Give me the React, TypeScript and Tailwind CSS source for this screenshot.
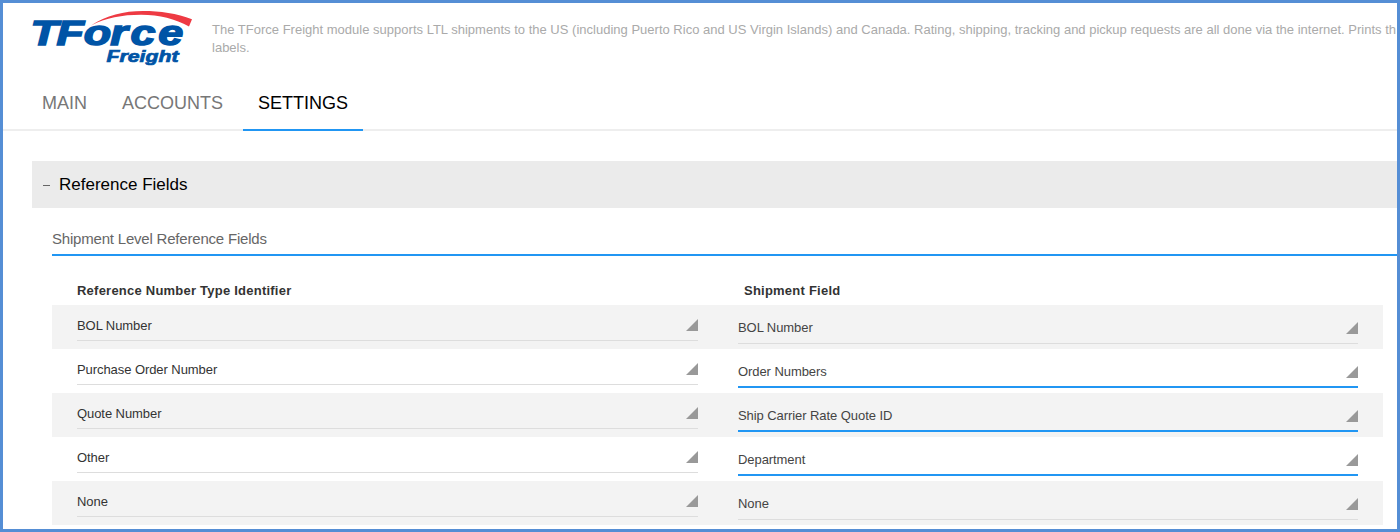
const rows = [
  { type: "BOL Number", field: "BOL Number", active: false },
  { type: "Purchase Order Number", field: "Order Numbers", active: true },
  { type: "Quote Number", field: "Ship Carrier Rate Quote ID", active: true },
  { type: "Other", field: "Department", active: true },
  { type: "None", field: "None", active: false },
];

function Corner() {
  return (
    <svg width="12" height="12" viewBox="0 0 12 12" className="block shrink-0">
      <path d="M12 0V12H0Z" fill="#999" />
    </svg>
  );
}

function Logo() {
  return (
    <svg width="164" height="60" viewBox="30 8 164 60" className="block shrink-0" aria-label="TForce Freight">
      <path d="M91 25.5C106 15.500 124 11 143 11C160 11 177 13.500 192 19.200L189 26.500C175 19 160 14.800 141 14.800C122 14.800 106 18 91 25.500Z" fill="#ee3a43" />
      <g fill="#0054a6" stroke="#0054a6" fontFamily="'Liberation Sans', Arial, sans-serif" fontWeight="bold" fontStyle="italic">
        <text transform="translate(0 44.800) scale(1.3 1)" x="23.4 43.4 64.4 84.8 100.4 121.8" y="0" fontSize="34.500" strokeWidth="1.500">TForce</text>
        <text x="106.500" y="62" fontSize="16.500" strokeWidth="0.700" textLength="72" lengthAdjust="spacingAndGlyphs">Freight</text>
      </g>
    </svg>
  );
}

export default function App() {
  return (
    <div className="flex h-[532px] w-[1400px] flex-col overflow-hidden border-[3px] border-[#558ed5] bg-white font-['Liberation_Sans',Arial,sans-serif] text-[13px] text-[#333]">
      <header className="flex h-[74px] shrink-0 pl-[27px] pt-[5px]">
        <Logo />
        <p className="ml-[18px] mt-[13px] whitespace-nowrap leading-[18px] tracking-[0.008px] text-[#aaa]">
          The TForce Freight module supports LTL shipments to the US (including Puerto Rico and US Virgin Islands) and Canada. Rating, shipping, tracking and pickup requests are all done via the internet. Prints th
          <br />
          labels.
        </p>
      </header>
      <nav className="flex h-[54px] shrink-0 border-b-2 border-[#eee] pl-6 text-[18px] leading-[52px] text-[#777]">
        <span className="h-[54px] w-[80px] pl-[15px]">MAIN</span>
        <span className="h-[54px] w-[136px] pl-[15px]">ACCOUNTS</span>
        <span className="h-[54px] w-[120px] border-b-2 border-[#2196f3] pl-[15px] text-black">SETTINGS</span>
      </nav>
      <main className="ml-[29px] mt-[30px] shrink-0">
        <div className="flex h-[47px] items-center bg-[#ebebeb] pl-[11px] text-[17px] text-black">
          <span className="mr-[9px] mt-px h-px w-[7px] bg-[#666]" />
          <span className="leading-5">Reference Fields</span>
        </div>
        <section className="ml-5">
          <h2 className="h-12 border-b-2 border-[#2196f3] pt-[21px] text-[15px] leading-5 tracking-[-0.2px] text-[#666]">Shipment Level Reference Fields</h2>
          <div className="w-[1331px]">
            <div className="flex h-[49px] pl-[25px] pt-[26px] font-bold leading-[18px] tracking-[0.23px]">
              <span className="w-[667px]">Reference Number Type Identifier</span>
              <span>Shipment Field</span>
            </div>
            {rows.map((r) => (
              <div key={r.type} className="flex h-11 items-start pl-[25px] tracking-[-0.07px] odd:bg-white even:bg-[#f3f3f3]">
                <div className="flex h-9 w-[621px] justify-between border-b border-[#ddd] pt-[14px]">
                  <span className="-mt-[2px] leading-[18px]">{r.type}</span>
                  <Corner />
                </div>
                <div className={`ml-10 flex h-[39px] w-[620px] justify-between pt-[17px] text-[#444] ${r.active ? "border-b-2 border-[#2196f3]" : "border-b border-[#ddd]"}`}>
                  <span className="-mt-[3px] leading-[18px]">{r.field}</span>
                  <Corner />
                </div>
              </div>
            ))}
          </div>
        </section>
      </main>
    </div>
  );
}
